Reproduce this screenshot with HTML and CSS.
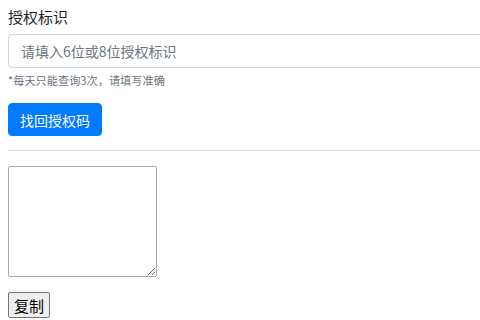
FILE: index.html
```html
<!DOCTYPE html>
<html>
<head>
    <meta charset="utf-8">
    <title>找回授权码</title>
    <link rel="stylesheet" href="styles.css">
</head>
<body>
    <div class="wrap">
        <form class="form">
            <div class="form-group">
                <label for="code">授权标识</label>
                <input type="text" id="code" class="form-control" placeholder="请填入6位或8位授权标识">
                <small class="hint">*每天只能查询3次，请填写准确</small>
            </div>
            <button type="button" class="btn-primary">找回授权码</button>
        </form>
        <hr>
        <textarea class="result"></textarea>
        <div class="copy-row">
            <button type="button" class="btn-copy">复制</button>
        </div>
    </div>
</body>
</html>
```

FILE: styles.css
```css
* {
    box-sizing: border-box;
}

html, body {
    overflow: hidden;
}

body {
    margin: 0;
    padding: 0 0 0 8px;
    font-family: "Noto Sans CJK SC", "Noto Sans", sans-serif;
    font-size: 14px;
    color: #212529;
    background: #fff;
}

.wrap {
    width: 600px;
}

.form-group {
    margin: 0 0 15px 0;
}

.form-group label {
    display: block;
    font-size: 15px;
    line-height: 22px;
    margin: 6px 0 6px 0;
}

.form-control {
    display: block;
    width: 100%;
    height: 34px;
    padding: 6px 12px;
    font-family: inherit;
    font-size: 14px;
    color: #495057;
    border: 1px solid #ced4da;
    border-radius: 4px;
}

.form-control::placeholder {
    color: #6c757d;
}

.hint {
    display: block;
    margin-top: 4px;
    font-size: 11.2px;
    line-height: 16px;
    color: #6c757d;
}

.btn-primary {
    display: block;
    width: 94px;
    height: 33px;
    padding: 0;
    font-family: inherit;
    font-size: 14px;
    color: #fff;
    background: #007bff;
    border: 1px solid #007bff;
    border-radius: 4px;
}

hr {
    margin: 14px 0 15px 0;
    border: 0;
    border-top: 1px solid rgba(0, 0, 0, 0.1);
}

.result {
    display: block;
    width: 149px;
    height: 111px;
    margin: 0;
    border: 1px solid #a9a9a9;
    border-radius: 2px;
}

.copy-row {
    margin-top: 15px;
}

.btn-copy {
    height: 26px;
    width: 42px;
    padding: 0;
    font-family: inherit;
    font-size: 15px;
    color: #000;
    background: #efefef;
    border: 1px solid #767676;
    border-radius: 2px;
}
```
